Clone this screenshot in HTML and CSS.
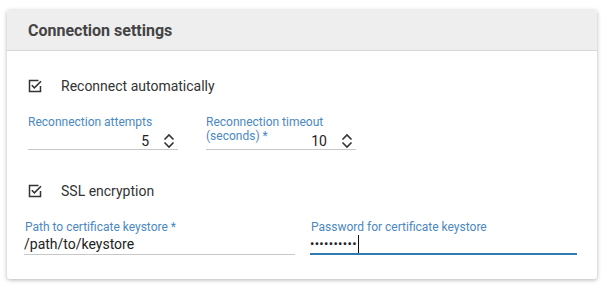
FILE: index.html
```html
<!DOCTYPE html>
<html lang="en">

<head>
    <meta charset="UTF-8">
    <meta name="viewport" content="width=device-width, initial-scale=1.0">
    <title>Connection settings</title>
    <link rel="stylesheet" href="styles.css">
</head>

<body>

    <div class="card">
        <div class="card-header">
            <h2>Connection settings</h2>
        </div>

        <div class="card-body">
            <div class="check-row">
                <svg class="check-icon" width="14" height="14" viewBox="0 0 14 14">
                    <path d="M10.5 1.5H1.5v11h11V7" fill="none" stroke="#333" stroke-width="1.5" />
                    <path d="M3.8 6.2l2.6 2.6L13 2.2" fill="none" stroke="#333" stroke-width="1.6" />
                </svg>
                <span>Reconnect automatically</span>
            </div>

            <div class="number-row">
                <div class="field field-number">
                    <label class="field-label">Reconnection attempts</label>
                    <div class="field-input">
                        <span class="value">5</span>
                        <svg class="spinner" width="12" height="16" viewBox="0 0 12 16">
                            <path d="M1.5 6.5L6 2l4.5 4.5M1.5 9.5L6 14l4.5-4.5" fill="none" stroke="#333" stroke-width="1.6" />
                        </svg>
                    </div>
                </div>
                <div class="field field-number field-wrap">
                    <label class="field-label">Reconnection timeout (seconds) *</label>
                    <div class="field-input">
                        <span class="value">10</span>
                        <svg class="spinner" width="12" height="16" viewBox="0 0 12 16">
                            <path d="M1.5 6.5L6 2l4.5 4.5M1.5 9.5L6 14l4.5-4.5" fill="none" stroke="#333" stroke-width="1.6" />
                        </svg>
                    </div>
                </div>
            </div>

            <div class="check-row check-ssl">
                <svg class="check-icon" width="14" height="14" viewBox="0 0 14 14">
                    <path d="M10.5 1.5H1.5v11h11V7" fill="none" stroke="#333" stroke-width="1.5" />
                    <path d="M3.8 6.2l2.6 2.6L13 2.2" fill="none" stroke="#333" stroke-width="1.6" />
                </svg>
                <span>SSL encryption</span>
            </div>

            <div class="text-row">
                <div class="field field-text">
                    <label class="field-label">Path to certificate keystore *</label>
                    <div class="field-input">
                        <span class="text-value">/path/to/keystore</span>
                    </div>
                </div>
                <div class="field field-text focused">
                    <label class="field-label">Password for certificate keystore</label>
                    <div class="field-input">
                        <span class="dots">&bull;&bull;&bull;&bull;&bull;&bull;&bull;&bull;&bull;&bull;</span><span class="caret"></span>
                    </div>
                </div>
            </div>
        </div>
    </div>

</body>

</html>
```

FILE: styles.css
```css
* {
    margin: 0;
    padding: 0;
    box-sizing: border-box;
    font-family: 'Roboto', 'Liberation Sans', sans-serif;
}

body {
    background: #fff;
    color: #333;
    padding: 10px 10px 10px 7px;
}

.card {
    background: #fff;
    border-radius: 3px;
    box-shadow: 0 1px 4px rgba(0, 0, 0, 0.3);
    height: 269px;
    overflow: hidden;
}

.card-header {
    height: 41px;
    background: #eeeeee;
    border-bottom: 1px solid #d6d6d6;
    padding-left: 21px;
    display: flex;
    align-items: center;
}

.card-header h2 {
    font-size: 16px;
    font-weight: 700;
    color: #444;
    margin-top: 1px;
}

.card-body {
    padding: 0 20px 0 17px;
}

.check-row {
    display: flex;
    align-items: center;
    gap: 19px;
    padding-left: 4px;
    margin-top: 27px;
    height: 16px;
    font-size: 14px;
    color: #333;
}

.check-ssl {
    margin-top: 33px;
}

.field-label {
    display: block;
    font-size: 12px;
    line-height: 14px;
    color: #4a88bf;
}

.number-row {
    display: flex;
    gap: 28px;
    padding-left: 4px;
    margin-top: 21px;
}

.field-number {
    width: 150px;
}

.field-number .field-label {
    height: 14px;
    white-space: nowrap;
}

.field-wrap .field-label {
    width: 120px;
    white-space: normal;
}

.field-number .field-input {
    display: flex;
    justify-content: flex-end;
    align-items: center;
    gap: 14px;
    height: 18px;
    margin-top: 3px;
    padding-right: 3px;
    border-bottom: 1px solid #c8c8c8;
}

.value {
    font-size: 14px;
    color: #222;
}

.text-row {
    display: grid;
    grid-template-columns: 271px 267px;
    gap: 15px;
    margin-top: 21px;
}

.field-text .field-label {
    padding-left: 1px;
}

.field-text .field-input {
    display: flex;
    align-items: center;
    height: 21px;
    border-bottom: 1px solid #c8c8c8;
}

.text-value {
    font-size: 14px;
    color: #222;
}

.focused .field-input {
    border-bottom: 2px solid #2f7cb0;
}

.dots {
    font-size: 13px;
    letter-spacing: 0.3px;
    color: #222;
}

.caret {
    display: inline-block;
    width: 1px;
    height: 18px;
    margin-left: 1px;
    background: #111;
}
```
